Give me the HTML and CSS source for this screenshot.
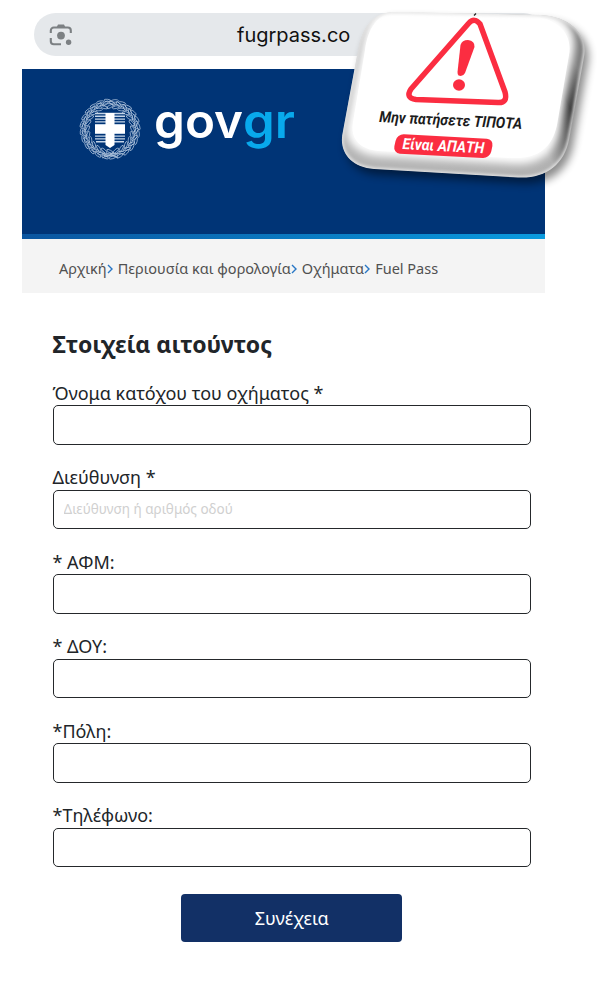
FILE: index.html
```
<!DOCTYPE html>
<html lang="el">
<head>
    <meta charset="UTF-8">
    <meta name="viewport" content="width=device-width, initial-scale=1.0">
    <title>Fuel Pass</title>
    <link rel="stylesheet" href="styles.css">
</head>
<body>
    <div class="address-bar">
        <svg class="lens-icon" viewBox="0 0 24 24" width="24" height="24">
            <path d="M1.8 10V7.5a3 3 0 0 1 3-3h14a3 3 0 0 1 3 3V10M1.8 15v3.200a3 3 0 0 0 3 3H12" fill="none" stroke="#7c8083" stroke-width="2.1"/>
            <path d="M7.500 4.500L9 1.500h6l1.500 3z" fill="#7c8083"/>
            <circle cx="12" cy="12.600" r="3.900" fill="#7c8083"/>
            <circle cx="19.600" cy="19.200" r="2.700" fill="#7c8083"/>
        </svg>
        <span class="url">fugrpass.co</span>
    </div>

    <header>
        <svg class="emblem" viewBox="-31 -31 62 62" width="62" height="62">
            <g id="wreath" fill="none" stroke="#b9cbe2" stroke-width="0.7"></g>
            <path d="M-15-16H15V9Q15 14 9 15Q3 16 0 19Q-3 16-9 15Q-15 14-15 9Z" fill="#003476"/>
            <path d="M-15-15.500H15M-15-12.700H15M-15-9.900H15M-15-7.100H15M-15-4.300H15M-15 4.300H15M-15 7.100H15M-15 9.900H15M-14 12.700H14" stroke="#c5d5e8" stroke-width="1.400"/>
            <path d="M-4.500-16H4.500V-4H15V4H4.500V16L0 19L-4.500 16V4H-15V-4H-4.500Z" fill="#fff"/>
        </svg>
        <svg class="logo" viewBox="0 0 144 66" width="144" height="66">
            <text x="0" y="44" textLength="89" lengthAdjust="spacingAndGlyphs" fill="#fff">gov</text>
            <text x="89" y="44" textLength="52" lengthAdjust="spacingAndGlyphs" fill="#08a9ec">gr</text>
        </svg>
    </header>

    <nav>
        <a class="crumb">Αρχική</a>
        <svg class="chevron" viewBox="0 0 6 10"><path d="M1 1l4 4-4 4"/></svg>
        <a class="crumb">Περιουσία και φορολογία</a>
        <svg class="chevron" viewBox="0 0 6 10"><path d="M1 1l4 4-4 4"/></svg>
        <a class="crumb">Οχήματα</a>
        <svg class="chevron" viewBox="0 0 6 10"><path d="M1 1l4 4-4 4"/></svg>
        <span class="crumb current">Fuel Pass</span>
    </nav>

    <main>
        <h1>Στοιχεία αιτούντος</h1>
        <form>
            <div class="field">
                <label for="owner">Όνομα κατόχου του οχήματος *</label>
                <input type="text" id="owner" name="owner">
            </div>
            <div class="field">
                <label for="address">Διεύθυνση *</label>
                <input type="text" id="address" name="address" placeholder="Διεύθυνση ή αριθμός οδού">
            </div>
            <div class="field">
                <label for="afm">* ΑΦΜ:</label>
                <input type="text" id="afm" name="afm">
            </div>
            <div class="field">
                <label for="doy">* ΔΟΥ:</label>
                <input type="text" id="doy" name="doy">
            </div>
            <div class="field">
                <label for="city">*Πόλη:</label>
                <input type="text" id="city" name="city">
            </div>
            <div class="field">
                <label for="phone">*Τηλέφωνο:</label>
                <input type="text" id="phone" name="phone">
            </div>
            <button type="button">Συνέχεια</button>
        </form>
    </main>

    <!-- Warning sticker over the page -->
    <svg class="sticker" viewBox="320 0 277 210" width="277" height="210">
        <defs>
            <path id="card" d="M394 12L541 15C574 17 588 37 584 57L569 140C564 165 545 179 518 177.500L374 169C350 167 338 151 343 131L358 50C362 26 374 12 394 12Z"/>
            <clipPath id="cardClip"><use href="#card"/></clipPath>
            <linearGradient id="bevel" gradientUnits="userSpaceOnUse" x1="440" y1="175" x2="590" y2="90">
                <stop offset="0" stop-color="#b4b4b4"/>
                <stop offset="0.600" stop-color="#b0b0b0"/>
                <stop offset="0.850" stop-color="#333"/>
                <stop offset="1" stop-color="#777"/>
            </linearGradient>
            <filter id="soft" x="-20%" y="-20%" width="140%" height="140%"><feGaussianBlur stdDeviation="4"/></filter>
            <filter id="rim"><feGaussianBlur stdDeviation="1.500"/></filter>
        </defs>
        <use href="#card" fill="#000" opacity="0.450" filter="url(#soft)" transform="translate(4 6)"/>
        <g clip-path="url(#cardClip)">
            <use href="#card" fill="url(#bevel)"/>
            <path d="M394 5L535 8C566 12 578 30 574 52L560 130C555 153 540 165 515 164L375 156C356 153 344 142 347 125L362 46C366 24 374 5 394 5Z" fill="#fff" filter="url(#soft)"/>
            <path d="M394 12L530 16C558 18 573 34 569 55L557 125C552 148 538 159 512 158L378 151C360 149 350 139 353 122L365 50C368 28 377 15 394 12Z" fill="#fff"/>
            <use href="#card" fill="none" stroke="#e6e6e6" stroke-width="3" filter="url(#rim)"/>
        </g>
        <path d="M468.500 23.500Q474.500 17 480 24L505 92Q508 103 498 102.500L416 99.500Q405 98 411 89Z" fill="none" stroke="#fb2d41" stroke-width="5.500" stroke-linejoin="round"/>
        <path d="M460.500 45Q462 40 468 40Q475 41 474.500 47L465 73Q463 77 458.500 75.500Q457.500 75 457.500 72Z" fill="#fb2d41"/>
        <ellipse cx="459" cy="85" rx="6" ry="5.700" fill="#fb2d41"/>
        <path d="M474 15.500l2-2" stroke="#222" stroke-width="1.200"/>
        <g transform="translate(379 122) rotate(2.800)">
            <text class="warn" x="0" y="0" textLength="143" lengthAdjust="spacingAndGlyphs" fill="#1b1b1b">Μην πατήσετε ΤΙΠΟΤΑ</text>
        </g>
        <g transform="translate(398 134) rotate(3)">
            <rect x="-1" y="0" width="97" height="19.500" rx="7" fill="#fb2d41" transform="skewX(-9)"/>
            <text class="warn" x="5" y="14.800" textLength="82" lengthAdjust="spacingAndGlyphs" fill="#fff">Είναι ΑΠΑΤΗ</text>
        </g>
    </svg>

    <script>
        // Draw the olive branches around the shield
        const wreath = document.getElementById("wreath");
        let d = "";
        for (let a = 0; a < 360; a += 15) {
            const flip = a < 180 ? -1 : 1;
            [[22.5, 28], [26, -28], [28.5, 12]].forEach(([r, tilt], i) => {
                wreath.innerHTML += `<ellipse rx="3.6" ry="1.3" transform="rotate(${a + i * 5}) translate(0 ${-r}) rotate(${tilt * flip})"/>`;
            });
        }
        wreath.innerHTML += '<circle r="25.5"/><path d="M-8 29Q0 24 8 29M-8 24Q0 30 8 24"/>';
    </script>
</body>
</html>
```
FILE: styles.css
```
* {
    box-sizing: border-box;
}

body {
    position: relative;
    margin: 0;
    padding: 13px 52px 0 22px;
    height: 982px;
    overflow: hidden;
    background-color: #fff;
    color: #212529;
    font-family: "Noto Sans", sans-serif;
}

.address-bar {
    display: flex;
    align-items: center;
    width: 511px;
    height: 43px;
    margin-left: 12px;
    padding-left: 15px;
    border-radius: 22px;
    background-color: #e5e8eb;
}

.url {
    margin-left: 164px;
    font-family: Inter, sans-serif;
    font-size: 20px;
    color: #111;
}

header {
    display: flex;
    height: 169.500px;
    margin-top: 13px;
    padding: 29px 0 0 57px;
    background: linear-gradient(90deg, #0b559f, #0a9bdf) bottom / 100% 5px no-repeat #003476;
}

.logo {
    margin-left: 13px;
    margin-top: -4px;
    font-family: Inter, sans-serif;
    font-size: 48px;
    font-weight: 600;
    overflow: visible;
}

nav {
    display: flex;
    align-items: center;
    height: 54px;
    padding: 5px 0 0 37px;
    background-color: #f4f4f4;
    font-size: 14.500px;
    color: #505050;
}

.crumb {
    white-space: nowrap;
}

.chevron {
    width: 6px;
    height: 10px;
    margin: 2px 5px 0 0;
    fill: none;
    stroke: #2776c5;
    stroke-width: 1.400;
}

main {
    padding: 0 14px 0 30.500px;
}

h1 {
    margin: 34px 0 0;
    font-size: 23px;
    line-height: 34px;
}

form {
    display: flex;
    flex-direction: column;
    margin-top: 20px;
}

.field {
    height: 84.600px;
}

.field label {
    display: block;
    height: 24.500px;
    font-size: 18px;
    line-height: 25px;
    white-space: nowrap;
}

.field input {
    display: block;
    width: 100%;
    height: 39.500px;
    padding: 0 10px;
    border: 1.500px solid #25282b;
    border-radius: 5px;
    background-color: #fff;
    font-family: inherit;
    font-size: 13.500px;
}

.field input::placeholder {
    color: #d0d0d0;
    opacity: 1;
}

button {
    align-self: center;
    width: 221px;
    height: 48px;
    margin-top: 6px;
    border: none;
    border-radius: 4px;
    background-color: #123066;
    color: #fff;
    font-family: inherit;
    font-size: 18px;
}

.sticker {
    position: absolute;
    top: 0;
    left: 320px;
}

.warn {
    font-family: Roboto, sans-serif;
    font-size: 15.500px;
    font-weight: 700;
    font-style: italic;
}
```
